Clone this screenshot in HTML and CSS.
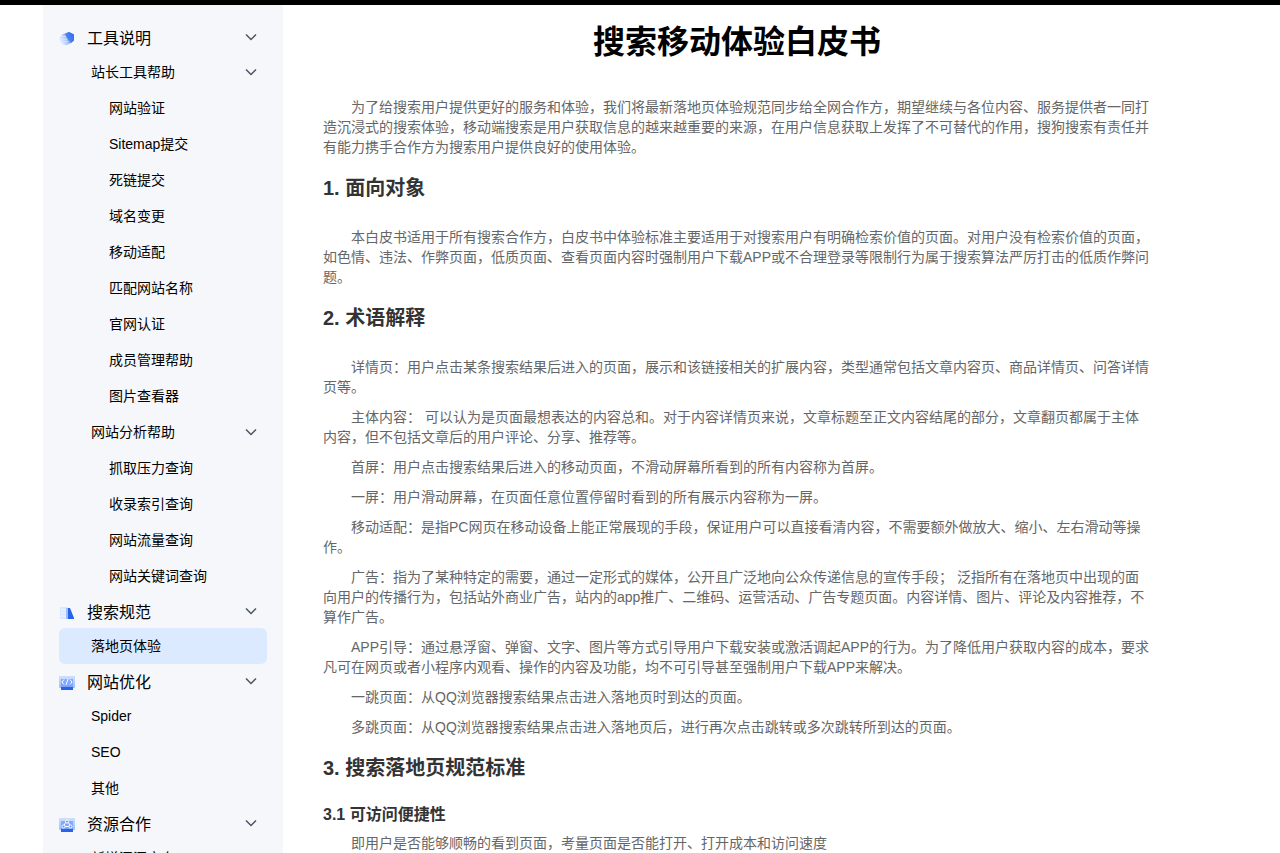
FILE: index.html
```html
<!DOCTYPE html>
<html lang="zh-CN">
<head>
<meta charset="utf-8">
<title>搜索移动体验白皮书</title>
<link rel="stylesheet" href="styles.css">
</head>
<body>
<div class="topbar"></div>
<div class="layout">
  <nav class="sidebar">
    <button class="row group" type="button">
      <svg class="icon" viewBox="0 0 16 16"><defs><linearGradient id="fade" x1="0" x2="1" y1=".8" y2=".3"><stop offset=".1" stop-color="#e3edff"/><stop offset=".5" stop-color="#9dbdfc"/><stop offset="1" stop-color="#2563eb"/></linearGradient></defs><path d="M10 1 15 3.500v6L12 12l-5 2.500-4-1.500-2-3V6l3-3z" fill="url(#fade)"/><path d="m6 3 4-2 5 2.500v6L12 12 8 7z" fill="#3b74f0" opacity=".75"/><path d="M1 5.500h6M0 8h8M1 10.500h7" stroke="#dbe8ff" stroke-width="1"/></svg>
      <span>工具说明</span><svg class="arrow" viewBox="0 0 12 12"><path d="M1 3.500 6 8.500l5-5"/></svg>
    </button>
    <button class="row sub" type="button"><span>站长工具帮助</span><svg class="arrow" viewBox="0 0 12 12"><path d="M1 3.500 6 8.500l5-5"/></svg></button>
    <a class="row leaf" href="#">网站验证</a>
    <a class="row leaf" href="#">Sitemap提交</a>
    <a class="row leaf" href="#">死链提交</a>
    <a class="row leaf" href="#">域名变更</a>
    <a class="row leaf" href="#">移动适配</a>
    <a class="row leaf" href="#">匹配网站名称</a>
    <a class="row leaf" href="#">官网认证</a>
    <a class="row leaf" href="#">成员管理帮助</a>
    <a class="row leaf" href="#">图片查看器</a>
    <button class="row sub" type="button"><span>网站分析帮助</span><svg class="arrow" viewBox="0 0 12 12"><path d="M1 3.500 6 8.500l5-5"/></svg></button>
    <a class="row leaf" href="#">抓取压力查询</a>
    <a class="row leaf" href="#">收录索引查询</a>
    <a class="row leaf" href="#">网站流量查询</a>
    <a class="row leaf" href="#">网站关键词查询</a>
    <button class="row group" type="button">
      <svg class="icon" viewBox="0 0 16 16"><path d="M1 2h8v12H1z" fill="#dbe7ff"/><path d="M2 5h6M2 8h6M2 11h6" stroke="#f1f6ff"/><path d="M8 3h3l4 10v1H8z" fill="#2563eb"/><path d="M7 3h2v11H7z" fill="#9dbdfc"/></svg>
      <span>搜索规范</span><svg class="arrow" viewBox="0 0 12 12"><path d="M1 3.500 6 8.500l5-5"/></svg>
    </button>
    <a class="row sub active" href="#" aria-current="page">落地页体验</a>
    <button class="row group" type="button">
      <svg class="icon" viewBox="0 0 16 16"><defs><linearGradient id="panel" x1="0" x2="0" y1="0" y2="1"><stop offset="0" stop-color="#cfe0ff"/><stop offset="1" stop-color="#9dbdff"/></linearGradient></defs><path d="M0 1h16v11q0 1-1 1H1q-1 0-1-1z" fill="url(#panel)"/><path d="M2 4h12v8H2z" fill="#6998fb" opacity=".7"/><path d="M5 4.500 3 7l2 2.500m6-5L13 7l-2 2.500M9 4 7 10" fill="none" stroke="#fff"/><path d="M2 12h12v3H2z" fill="#2563eb"/></svg>
      <span>网站优化</span><svg class="arrow" viewBox="0 0 12 12"><path d="M1 3.500 6 8.500l5-5"/></svg>
    </button>
    <a class="row sub" href="#">Spider</a>
    <a class="row sub" href="#">SEO</a>
    <a class="row sub" href="#">其他</a>
    <button class="row group" type="button">
      <svg class="icon" viewBox="0 0 16 16"><path d="M0 1h16v11q0 1-1 1H1q-1 0-1-1z" fill="url(#panel)"/><path d="M2 4h12v8H2z" fill="#6998fb" opacity=".7"/><path d="M7 5 4.500 9M9 5l2.500 4M6 9.500h4" stroke="#fff"/><g fill="#6998fb" stroke="#fff"><circle cx="8" cy="4.500" r="1.500"/><circle cx="4.500" cy="9.500" r="1.500"/><circle cx="11.500" cy="9.500" r="1.500"/></g><path d="M2 12h12v3H2z" fill="#2563eb"/></svg>
      <span>资源合作</span><svg class="arrow" viewBox="0 0 12 12"><path d="M1 3.500 6 8.500l5-5"/></svg>
    </button>
    <a class="row sub" href="#">新增漏洞方向</a>
  </nav>
  <main class="article">
    <h1>搜索移动体验白皮书</h1>
    <p>为了给搜索用户提供更好的服务和体验，我们将最新落地页体验规范同步给全网合作方，期望继续与各位内容、服务提供者一同打造沉浸式的搜索体验，移动端搜索是用户获取信息的越来越重要的来源，在用户信息获取上发挥了不可替代的作用，搜狗搜索有责任并有能力携手合作方为搜索用户提供良好的使用体验。</p>
    <h2>1. 面向对象</h2>
    <p>本白皮书适用于所有搜索合作方，白皮书中体验标准主要适用于对搜索用户有明确检索价值的页面。对用户没有检索价值的页面，如色情、违法、作弊页面，低质页面、查看页面内容时强制用户下载APP或不合理登录等限制行为属于搜索算法严厉打击的低质作弊问题。</p>
    <h2>2. 术语解释</h2>
    <p>详情页：用户点击某条搜索结果后进入的页面，展示和该链接相关的扩展内容，类型通常包括文章内容页、商品详情页、问答详情页等。</p>
    <p>主体内容： 可以认为是页面最想表达的内容总和。对于内容详情页来说，文章标题至正文内容结尾的部分，文章翻页都属于主体内容，但不包括文章后的用户评论、分享、推荐等。</p>
    <p>首屏：用户点击搜索结果后进入的移动页面，不滑动屏幕所看到的所有内容称为首屏。</p>
    <p>一屏：用户滑动屏幕，在页面任意位置停留时看到的所有展示内容称为一屏。</p>
    <p>移动适配：是指PC网页在移动设备上能正常展现的手段，保证用户可以直接看清内容，不需要额外做放大、缩小、左右滑动等操作。</p>
    <p>广告：指为了某种特定的需要，通过一定形式的媒体，公开且广泛地向公众传递信息的宣传手段； 泛指所有在落地页中出现的面向用户的传播行为，包括站外商业广告，站内的app推广、二维码、运营活动、广告专题页面。内容详情、图片、评论及内容推荐，不算作广告。</p>
    <p>APP引导：通过悬浮窗、弹窗、文字、图片等方式引导用户下载安装或激活调起APP的行为。为了降低用户获取内容的成本，要求凡可在网页或者小程序内观看、操作的内容及功能，均不可引导甚至强制用户下载APP来解决。</p>
    <p>一跳页面：从QQ浏览器搜索结果点击进入落地页时到达的页面。</p>
    <p>多跳页面：从QQ浏览器搜索结果点击进入落地页后，进行再次点击跳转或多次跳转所到达的页面。</p>
    <h2>3. 搜索落地页规范标准</h2>
    <h3>3.1 可访问便捷性</h3>
    <p>即用户是否能够顺畅的看到页面，考量页面是否能打开、打开成本和访问速度</p>
  </main>
</div>
</body>
</html>
```
FILE: styles.css
```css
* {
  box-sizing: border-box;
}

body {
  margin: 0;
  background: #fff;
  color: #000;
  font-family: "Liberation Sans", "Noto Sans CJK SC", sans-serif;
  font-size: 14px;
  line-height: 20px;
  text-spacing-trim: space-all;
}

.topbar {
  height: 5px;
  background: #000;
}

.layout {
  display: flex;
  max-width: 1194px;
  min-height: calc(100vh - 5px);
  margin: 0 auto;
}

.sidebar {
  display: flex;
  flex-direction: column;
  flex: 0 0 240px;
  padding: 15px 16px 0;
  background: #f5f7fb;
}

.row {
  display: flex;
  align-items: center;
  width: 100%;
  height: 36px;
  padding: 0 10px 0 32px;
  border: 0;
  border-radius: 6px;
  background: none;
  color: #000;
  font: inherit;
  text-align: left;
  text-decoration: none;
  cursor: pointer;
}

.group {
  gap: 12px;
  height: 34px;
  padding-top: 4px;
  padding-left: 0;
  font-size: 16px;
}

.leaf {
  padding-left: 50px;
}

.active {
  background: #dbeafe;
}

.icon {
  width: 16px;
  height: 16px;
}

.arrow {
  width: 12px;
  height: 12px;
  margin-left: auto;
  fill: none;
  stroke: #4b5563;
  stroke-width: 1.5;
}

.group .arrow {
  margin-bottom: 4px;
}

.article {
  flex: 1;
  min-width: 0;
  padding: 15px 86px 0 40px;
}

h1 {
  margin: 0 0 33px;
  font-size: 32px;
  line-height: 44px;
  text-align: center;
}

h2 {
  margin: 11px 0 19px;
  color: #333;
  font-size: 20px;
  line-height: 40px;
}

h3 {
  margin: 14px 0 5px;
  color: #333;
  font-size: 16px;
  line-height: 26px;
}

h2 + h3 {
  margin-top: -5px;
}

p {
  margin: 0 0 10px;
  color: #666;
  text-indent: 28px;
}
```
